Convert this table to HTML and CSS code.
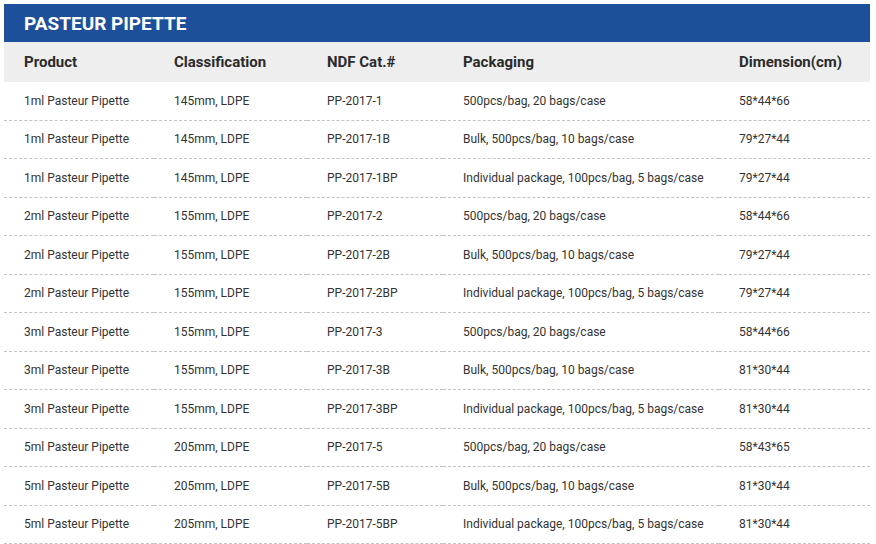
FILE: index.html
```html
<!DOCTYPE html>
<html>
<head>
<meta charset="utf-8">
<link rel="stylesheet" href="styles.css">
</head>
<body>
<div class="panel">
  <div class="title">PASTEUR PIPETTE</div>
  <table class="spec">
    <colgroup>
      <col class="c1"><col class="c2"><col class="c3"><col class="c4"><col class="c5">
    </colgroup>
    <thead>
      <tr><th>Product</th><th>Classification</th><th>NDF Cat.#</th><th>Packaging</th><th>Dimension(cm)</th></tr>
    </thead>
    <tbody>
      <tr><td>1ml Pasteur Pipette</td><td>145mm, LDPE</td><td>PP-2017-1</td><td>500pcs/bag, 20 bags/case</td><td>58*44*66</td></tr>
      <tr><td>1ml Pasteur Pipette</td><td>145mm, LDPE</td><td>PP-2017-1B</td><td>Bulk, 500pcs/bag, 10 bags/case</td><td>79*27*44</td></tr>
      <tr><td>1ml Pasteur Pipette</td><td>145mm, LDPE</td><td>PP-2017-1BP</td><td>Individual package, 100pcs/bag, 5 bags/case</td><td>79*27*44</td></tr>
      <tr><td>2ml Pasteur Pipette</td><td>155mm, LDPE</td><td>PP-2017-2</td><td>500pcs/bag, 20 bags/case</td><td>58*44*66</td></tr>
      <tr><td>2ml Pasteur Pipette</td><td>155mm, LDPE</td><td>PP-2017-2B</td><td>Bulk, 500pcs/bag, 10 bags/case</td><td>79*27*44</td></tr>
      <tr><td>2ml Pasteur Pipette</td><td>155mm, LDPE</td><td>PP-2017-2BP</td><td>Individual package, 100pcs/bag, 5 bags/case</td><td>79*27*44</td></tr>
      <tr><td>3ml Pasteur Pipette</td><td>155mm, LDPE</td><td>PP-2017-3</td><td>500pcs/bag, 20 bags/case</td><td>58*44*66</td></tr>
      <tr><td>3ml Pasteur Pipette</td><td>155mm, LDPE</td><td>PP-2017-3B</td><td>Bulk, 500pcs/bag, 10 bags/case</td><td>81*30*44</td></tr>
      <tr><td>3ml Pasteur Pipette</td><td>155mm, LDPE</td><td>PP-2017-3BP</td><td>Individual package, 100pcs/bag, 5 bags/case</td><td>81*30*44</td></tr>
      <tr><td>5ml Pasteur Pipette</td><td>205mm, LDPE</td><td>PP-2017-5</td><td>500pcs/bag, 20 bags/case</td><td>58*43*65</td></tr>
      <tr><td>5ml Pasteur Pipette</td><td>205mm, LDPE</td><td>PP-2017-5B</td><td>Bulk, 500pcs/bag, 10 bags/case</td><td>81*30*44</td></tr>
      <tr><td>5ml Pasteur Pipette</td><td>205mm, LDPE</td><td>PP-2017-5BP</td><td>Individual package, 100pcs/bag, 5 bags/case</td><td>81*30*44</td></tr>
    </tbody>
  </table>
</div>
</body>
</html>
```
FILE: styles.css
```css
html, body {
  margin: 0;
  padding: 0;
  background: #ffffff;
}
body {
  padding: 4px 6px 0 4px;
  font-family: Roboto, "Liberation Sans", Arial, sans-serif;
  color: #333333;
}
.panel {
  width: 866px;
}
.title {
  background: #1e4f9a;
  color: #ffffff;
  font-weight: 700;
  font-size: 19px;
  height: 38px;
  line-height: 39px;
  padding-left: 20px;
}
.spec {
  width: 866px;
  border-collapse: collapse;
  table-layout: fixed;
}
.c1 { width: 150px; }
.c2 { width: 153px; }
.c3 { width: 136px; }
.c4 { width: 276px; }
.c5 { width: 151px; }
.spec th {
  background: #eeeeee;
  height: 40px;
  padding: 0 0 0 20px;
  text-align: left;
  font-size: 15px;
  font-weight: 700;
  color: #2b2b2b;
}
.spec td {
  height: 37.5px;
  padding: 0 0 0 20px;
  font-size: 12px;
  color: #333333;
  border-bottom: 1px dashed #c4c4c4;
  white-space: nowrap;
}
```
